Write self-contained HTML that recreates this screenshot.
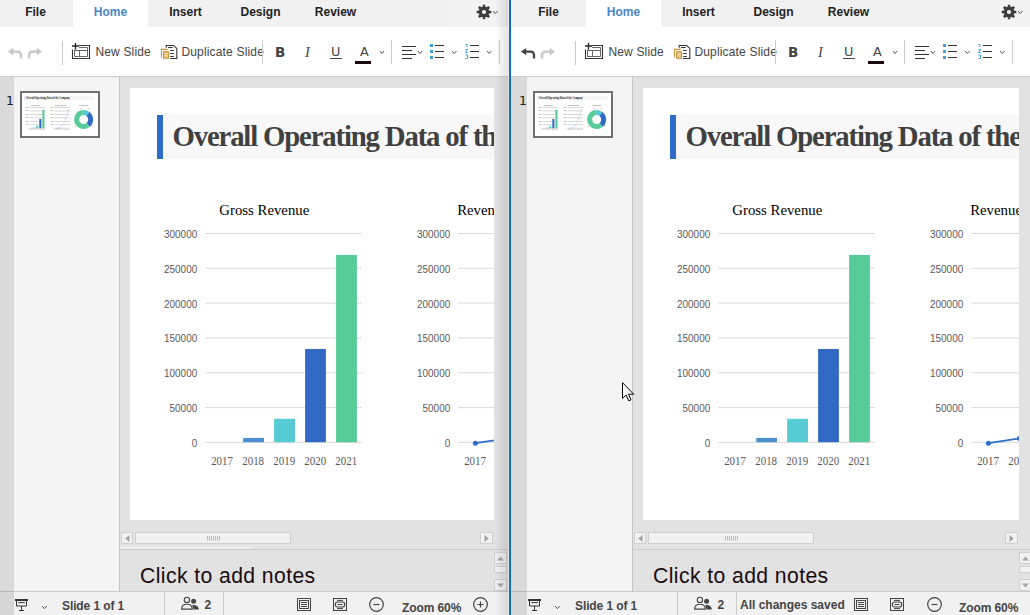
<!DOCTYPE html><html><head><meta charset="utf-8"><title>Presentation Editor</title><style>
html,body{margin:0;padding:0;}
body{width:1030px;height:615px;overflow:hidden;position:relative;background:#e2e2e2;font-family:"Liberation Sans",Arial,sans-serif;font-size:12px;color:#444;}
.pane{position:absolute;top:0;height:615px;overflow:hidden;background:#e2e2e2;}
.abs{position:absolute;}
.tabbar{position:absolute;left:0;top:0;right:0;height:27px;background:#f1f1f1;}
.tab{position:absolute;top:0;width:75px;height:27px;line-height:25px;text-align:center;font-weight:bold;font-size:12px;color:#222;}
.tab.act{background:#fff;color:#4a87c7;}
.toolbar{position:absolute;left:0;top:27px;right:0;height:49px;background:#fff;border-bottom:1px solid #cbcbcb;}
.sep{position:absolute;width:1px;background:#cbcbcb;top:40px;height:24px;}
.tbtxt{position:absolute;top:45px;line-height:14px;font-size:12px;color:#444;white-space:nowrap;letter-spacing:0.17px;margin-left:-0.6px;}
.strip{position:absolute;left:0;top:77px;width:16px;bottom:0;background:rgba(0,0,0,0.105);}
.thumbs{position:absolute;left:0;top:77px;width:121px;height:514px;background:#f4f4f4;border-right:1px solid #c4c4c4;}
.editor{position:absolute;left:122px;top:77px;right:0;height:472px;background:#e2e2e2;overflow:hidden;}
.slideclip{position:absolute;left:10px;top:11px;right:15px;height:432px;overflow:hidden;}
.slide{position:absolute;left:0;top:0;width:768px;height:432px;background:#fff;}
.notes{position:absolute;left:122px;top:549px;right:0;height:42px;border-top:1px solid #cbcbcb;background:#e2e2e2;overflow:hidden;}
.status{position:absolute;left:0;top:591px;right:0;height:23px;border-top:1px solid #cbcbcb;background:#f1f1f1;}
.sttxt{position:absolute;top:599px;line-height:14px;font-size:12px;font-weight:bold;color:#444;white-space:nowrap;letter-spacing:-0.1px;}
.sbtn{position:absolute;background:#f1f1f1;border:1px solid #cfcfcf;box-sizing:border-box;}
svg{position:absolute;overflow:visible;}
.serif{font-family:"Liberation Serif","Times New Roman",serif;}
</style></head><body><div class="pane" style="left:-2px;width:511px"><div class="tabbar"><div class="abs" style="left:450px;top:0;right:0;height:27px;background:#f3f3f3"></div><div class="tab" style="left:0px">File</div><div class="tab act" style="left:75px">Home</div><div class="tab" style="left:150px">Insert</div><div class="tab" style="left:225px">Design</div><div class="tab" style="left:300px">Review</div><svg class="abs" style="left:0;top:0" width="511" height="27"><path d="M480.55 12.00 a5.45 5.45 0 1 1 10.90 0 a5.45 5.45 0 1 1 -10.90 0 Z M483.90 12.00 a2.10 2.10 0 1 0 4.20 0 a2.10 2.10 0 1 0 -4.20 0 Z M490.25 10.40 L493.30 10.85 L493.30 13.15 L490.25 13.60 Z M490.14 13.87 L491.98 16.35 L490.35 17.98 L487.87 16.14 Z M487.60 16.25 L487.15 19.30 L484.85 19.30 L484.40 16.25 Z M484.13 16.14 L481.65 17.98 L480.02 16.35 L481.86 13.87 Z M481.75 13.60 L478.70 13.15 L478.70 10.85 L481.75 10.40 Z M481.86 10.13 L480.02 7.65 L481.65 6.02 L484.13 7.86 Z M484.40 7.75 L484.85 4.70 L487.15 4.70 L487.60 7.75 Z M487.87 7.86 L490.35 6.02 L491.98 7.65 L490.14 10.13 Z" fill="#3c3c3c" fill-rule="nonzero"/></svg><svg class="abs" style="left:494.7px;top:10.9px" width="4.5" height="3.5"><path d="M0 0 L2.25 2.5 L4.5 0" fill="none" stroke="#555" stroke-width="1"/></svg></div><div class="toolbar"></div><svg class="abs" style="left:10px;top:47.6px" width="15" height="11" viewBox="0 0 15 11"><path d="M5.2 0 L0 3.6 L5.2 7.2 Z" fill="#c6c6c6"/><path d="M4 3.6 H9.5 Q13 3.6 13 7.5 V10.5" fill="none" stroke="#c6c6c6" stroke-width="2.3"/></svg><svg class="abs" style="left:29.2px;top:47.6px" width="15" height="11" viewBox="0 0 15 11"><path d="M9.8 0 L15 3.6 L9.8 7.2 Z" fill="#c6c6c6"/><path d="M11 3.6 H5.5 Q2 3.6 2 7.5 V10.5" fill="none" stroke="#c6c6c6" stroke-width="2.3"/></svg><div class="sep" style="left:64px;top:41px"></div><svg class="abs" style="left:73px;top:43px" width="19" height="16" viewBox="0 0 19 16"><path d="M4.5 0 V6.6 M1 3 H8" stroke="#222" stroke-width="1.35" fill="none"/><path d="M8 2.5 H18.5 V15.5 H1.5 V6.6" stroke="#333" stroke-width="1.1" fill="none"/><path d="M8 4.5 H16.5 V13.5 H3.5 V6.6 M3.5 7.5 H16.5 M8.5 7.5 V13.5" stroke="#666" stroke-width="1" fill="none"/></svg><div class="tbtxt" style="left:98px">New Slide</div><svg class="abs" style="left:163px;top:45px" width="17" height="15" viewBox="0 0 17 15"><path d="M5.2 2.7 V0.5 H12.6 L15.8 3.4 V13.5 H9.2" stroke="#333" stroke-width="1.1" fill="none"/><path d="M7.1 2.5 H11.7 M9.2 5.5 H12.8 M9.2 8.5 H12.8 M9.2 11.5 H12.8" stroke="#333" stroke-width="1.1" fill="none"/><path d="M0.5 12.6 V4.4 H6.7" stroke="#c8923a" stroke-width="1.1" fill="none"/><rect x="2.7" y="6.8" width="4.8" height="6.4" fill="#f3cf96" stroke="#c8923a" stroke-width="1.2"/></svg><div class="tbtxt" style="left:184px">Duplicate Slide</div><div class="sep" style="left:264px"></div><div class="abs" style="left:277px;top:44.2px;font:bold 13.5px/16px 'DejaVu Sans',sans-serif;color:#444">B</div><div class="abs" style="left:307px;top:44px;font:italic 14.5px/16px 'Liberation Serif',serif;color:#444">I</div><div class="abs" style="left:333px;top:44.2px;font:12.8px/16px 'DejaVu Sans',sans-serif;color:#444">U</div><div class="abs" style="left:332px;top:58px;width:12px;height:1px;background:#444"></div><div class="abs" style="left:362px;top:44.2px;font:12.8px/16px 'DejaVu Sans',sans-serif;color:#444">A</div><div class="abs" style="left:357px;top:61px;width:16px;height:3px;background:#1a0a0a"></div><svg class="abs" style="left:381.5px;top:51px" width="4" height="3.5"><path d="M0 0 L2 2.5 L4 0" fill="none" stroke="#555" stroke-width="1"/></svg><div class="sep" style="left:393px"></div><svg class="abs" style="left:404px;top:45px" width="15" height="14"><path d="M0 1.5 H14 M0 5.5 H10 M0 9.5 H14 M0 13.5 H10" stroke="#333" stroke-width="1" fill="none"/></svg><svg class="abs" style="left:420px;top:51px" width="4" height="3.5"><path d="M0 0 L2 2.5 L4 0" fill="none" stroke="#555" stroke-width="1"/></svg><svg class="abs" style="left:432px;top:44px" width="15" height="15"><rect x="0" y="0" width="3" height="3" fill="#3d9fdb"/><rect x="0" y="6" width="3" height="3" fill="#3d9fdb"/><rect x="0" y="12" width="3" height="3" fill="#3d9fdb"/><path d="M5 1.5 H14 M5 7.5 H14 M5 13.5 H14" stroke="#333" fill="none"/></svg><svg class="abs" style="left:454px;top:51px" width="4.5" height="3.5"><path d="M0 0 L2.25 2.5 L4.5 0" fill="none" stroke="#555" stroke-width="1"/></svg><svg class="abs" style="left:467px;top:44px" width="15" height="15"><path d="M0.5 0.5 H2 V3 M0.5 5.5 H2.5 L0.5 8.5 H2.5 M0.5 11 H2.5 V14.5 H0.5" stroke="#3d9fdb" fill="none"/><path d="M5 1.5 H14 M5 7.5 H14 M5 13.5 H14" stroke="#333" fill="none"/></svg><svg class="abs" style="left:489px;top:51px" width="4.5" height="3.5"><path d="M0 0 L2.25 2.5 L4.5 0" fill="none" stroke="#555" stroke-width="1"/></svg><div class="sep" style="left:501px"></div><svg class="abs" style="left:0;top:320px" width="16" height="60"><path d="M14.5 5 L2 29 L14.5 53" fill="none" stroke="#b4b4b4" stroke-width="3.2"/></svg><div class="thumbs"></div><div class="abs" style="left:8px;top:94px;font:12.5px/14px 'DejaVu Sans',sans-serif;color:#222">1</div><div class="abs" style="left:22px;top:91px;width:76px;height:43px;border:2px solid #707070;background:#fff;overflow:hidden"><svg class="abs" style="left:0;top:0" width="76" height="43" viewBox="0 0 768 432"><rect x="27" y="27" width="6" height="44" fill="#2f6bc9" opacity=".55"/><rect x="33" y="27" width="698" height="44" fill="#f6f6f6"/><text x="42.5" y="58" font-family="Liberation Serif, serif" font-weight="bold" font-size="31" fill="#1c1c1c" textLength="441" lengthAdjust="spacingAndGlyphs">Overall Operating Data of the Company</text><svg class="abs" style="left:0;top:0" width="768" height="432"><text x="134.3" y="127" font-family="Liberation Serif, serif" font-size="14.8" fill="#000" text-anchor="middle">Gross Revenue</text><rect x="75.2" y="142" width="156.5" height="7" fill="#c6c6c6"/><text x="34.02" y="149.9" font-family="Liberation Sans, sans-serif" font-size="10.8" fill="#595959" textLength="33.18" lengthAdjust="spacingAndGlyphs">300000</text><rect x="75.2" y="176.8" width="156.5" height="7" fill="#c6c6c6"/><text x="34.02" y="184.7" font-family="Liberation Sans, sans-serif" font-size="10.8" fill="#595959" textLength="33.18" lengthAdjust="spacingAndGlyphs">250000</text><rect x="75.2" y="211.6" width="156.5" height="7" fill="#c6c6c6"/><text x="34.02" y="219.5" font-family="Liberation Sans, sans-serif" font-size="10.8" fill="#595959" textLength="33.18" lengthAdjust="spacingAndGlyphs">200000</text><rect x="75.2" y="246.5" width="156.5" height="7" fill="#c6c6c6"/><text x="34.02" y="254.4" font-family="Liberation Sans, sans-serif" font-size="10.8" fill="#595959" textLength="33.18" lengthAdjust="spacingAndGlyphs">150000</text><rect x="75.2" y="281.3" width="156.5" height="7" fill="#c6c6c6"/><text x="34.02" y="289.2" font-family="Liberation Sans, sans-serif" font-size="10.8" fill="#595959" textLength="33.18" lengthAdjust="spacingAndGlyphs">100000</text><rect x="75.2" y="316.1" width="156.5" height="7" fill="#c6c6c6"/><text x="39.55" y="324" font-family="Liberation Sans, sans-serif" font-size="10.8" fill="#595959" textLength="27.65" lengthAdjust="spacingAndGlyphs">50000</text><rect x="75.2" y="350.9" width="156.5" height="7" fill="#c6c6c6"/><text x="61.67" y="358.8" font-family="Liberation Sans, sans-serif" font-size="10.8" fill="#595959" textLength="5.53" lengthAdjust="spacingAndGlyphs">0</text><rect x="113.2" y="349.9" width="20.8" height="4.3" fill="#4a90d2"/><rect x="144.1" y="330.8" width="20.9" height="23.4" fill="#56cbd4"/><rect x="175.1" y="261" width="20.8" height="93.2" fill="#3269c4"/><rect x="206.1" y="166.9" width="20.8" height="187.3" fill="#57cc99"/><text x="81.15" y="377.4" font-family="Liberation Serif, serif" font-size="11.5" fill="#595959" textLength="21.9" lengthAdjust="spacingAndGlyphs">2017</text><text x="112.19" y="377.4" font-family="Liberation Serif, serif" font-size="11.5" fill="#595959" textLength="21.9" lengthAdjust="spacingAndGlyphs">2018</text><text x="143.23" y="377.4" font-family="Liberation Serif, serif" font-size="11.5" fill="#595959" textLength="21.9" lengthAdjust="spacingAndGlyphs">2019</text><text x="174.27" y="377.4" font-family="Liberation Serif, serif" font-size="11.5" fill="#595959" textLength="21.9" lengthAdjust="spacingAndGlyphs">2020</text><text x="205.31" y="377.4" font-family="Liberation Serif, serif" font-size="11.5" fill="#595959" textLength="21.9" lengthAdjust="spacingAndGlyphs">2021</text></svg><svg class="abs" style="left:0;top:0" width="768" height="432"><text x="327.2" y="127" font-family="Liberation Serif, serif" font-size="14.8" fill="#000">Revenue Trend Line</text><rect x="328.2" y="142" width="156.5" height="7" fill="#c6c6c6"/><text x="287.02" y="149.9" font-family="Liberation Sans, sans-serif" font-size="10.8" fill="#595959" textLength="33.18" lengthAdjust="spacingAndGlyphs">300000</text><rect x="328.2" y="176.8" width="156.5" height="7" fill="#c6c6c6"/><text x="287.02" y="184.7" font-family="Liberation Sans, sans-serif" font-size="10.8" fill="#595959" textLength="33.18" lengthAdjust="spacingAndGlyphs">250000</text><rect x="328.2" y="211.6" width="156.5" height="7" fill="#c6c6c6"/><text x="287.02" y="219.5" font-family="Liberation Sans, sans-serif" font-size="10.8" fill="#595959" textLength="33.18" lengthAdjust="spacingAndGlyphs">200000</text><rect x="328.2" y="246.5" width="156.5" height="7" fill="#c6c6c6"/><text x="287.02" y="254.4" font-family="Liberation Sans, sans-serif" font-size="10.8" fill="#595959" textLength="33.18" lengthAdjust="spacingAndGlyphs">150000</text><rect x="328.2" y="281.3" width="156.5" height="7" fill="#c6c6c6"/><text x="287.02" y="289.2" font-family="Liberation Sans, sans-serif" font-size="10.8" fill="#595959" textLength="33.18" lengthAdjust="spacingAndGlyphs">100000</text><rect x="328.2" y="316.1" width="156.5" height="7" fill="#c6c6c6"/><text x="292.55" y="324" font-family="Liberation Sans, sans-serif" font-size="10.8" fill="#595959" textLength="27.65" lengthAdjust="spacingAndGlyphs">50000</text><rect x="328.2" y="350.9" width="156.5" height="7" fill="#c6c6c6"/><text x="314.67" y="358.8" font-family="Liberation Sans, sans-serif" font-size="10.8" fill="#595959" textLength="5.53" lengthAdjust="spacingAndGlyphs">0</text><polyline points="345.4,355.2 376.4,350.5 407.5,331 438.5,261 469.6,167" fill="none" stroke="#2f6bc9" stroke-width="1.7"/><circle cx="345.4" cy="355.2" r="2.5" fill="#2f6bc9"/><circle cx="376.4" cy="350.5" r="2.5" fill="#2f6bc9"/><circle cx="407.5" cy="331" r="2.5" fill="#2f6bc9"/><circle cx="438.5" cy="261" r="2.5" fill="#2f6bc9"/><circle cx="469.6" cy="167" r="2.5" fill="#2f6bc9"/><text x="334.15" y="377.4" font-family="Liberation Serif, serif" font-size="11.5" fill="#595959" textLength="21.9" lengthAdjust="spacingAndGlyphs">2017</text><text x="365.19" y="377.4" font-family="Liberation Serif, serif" font-size="11.5" fill="#595959" textLength="21.9" lengthAdjust="spacingAndGlyphs">2018</text><text x="396.23" y="377.4" font-family="Liberation Serif, serif" font-size="11.5" fill="#595959" textLength="21.9" lengthAdjust="spacingAndGlyphs">2019</text><text x="427.27" y="377.4" font-family="Liberation Serif, serif" font-size="11.5" fill="#595959" textLength="21.9" lengthAdjust="spacingAndGlyphs">2020</text><text x="458.31" y="377.4" font-family="Liberation Serif, serif" font-size="11.5" fill="#595959" textLength="21.9" lengthAdjust="spacingAndGlyphs">2021</text></svg><svg class="abs" style="left:0;top:0" width="768" height="432"><text x="623" y="127" font-family="Liberation Serif, serif" font-size="15" fill="#000" text-anchor="middle">Revenue Share</text><path d="M613.1 196.2 A71 71 0 0 1 666.2 210.2" fill="none" stroke="#56cbd4" stroke-width="50"/><path d="M666.2 210.2 A71 71 0 0 1 668.6 320.9" fill="none" stroke="#3269c4" stroke-width="50"/><path d="M668.6 320.9 A71 71 0 1 1 613.1 196.2" fill="none" stroke="#57cc99" stroke-width="50"/><text x="599" y="156" font-family="Liberation Sans, sans-serif" font-size="10" fill="#595959" text-anchor="middle">2%</text><text x="674" y="156" font-family="Liberation Sans, sans-serif" font-size="10" fill="#595959" text-anchor="middle">8%</text><text x="537" y="345" font-family="Liberation Sans, sans-serif" font-size="10" fill="#595959" text-anchor="middle">61%</text><text x="707" y="337" font-family="Liberation Sans, sans-serif" font-size="10" fill="#595959" text-anchor="middle">29%</text></svg></svg></div><div class="editor"><div class="slideclip"><div class="slide"><div class="abs" style="left:27.2px;top:27px;width:5.4px;height:44px;background:#2f6bc9"></div><div class="abs" style="left:33px;top:27px;width:698px;height:44px;background:#f8f8f8"></div><div class="abs serif" id="title" style="left:42.5px;top:26px;line-height:44px;font-size:28.8px;font-weight:bold;color:#404040;white-space:nowrap;letter-spacing:-1.18px">Overall Operating Data of the Company</div><svg class="abs" style="left:0;top:0" width="768" height="432"><text class="serif" id="c1t" x="134.3" y="127" font-family="Liberation Serif, serif" font-size="14.8" fill="#000" text-anchor="middle">Gross Revenue</text><rect x="75.2" y="145" width="156.5" height="1" fill="#d9d9d9"/><text x="34.02" y="149.9" font-family="Liberation Sans, sans-serif" font-size="10.8" fill="#595959" textLength="33.18" lengthAdjust="spacingAndGlyphs">300000</text><rect x="75.2" y="179.8" width="156.5" height="1" fill="#d9d9d9"/><text x="34.02" y="184.7" font-family="Liberation Sans, sans-serif" font-size="10.8" fill="#595959" textLength="33.18" lengthAdjust="spacingAndGlyphs">250000</text><rect x="75.2" y="214.6" width="156.5" height="1" fill="#d9d9d9"/><text x="34.02" y="219.5" font-family="Liberation Sans, sans-serif" font-size="10.8" fill="#595959" textLength="33.18" lengthAdjust="spacingAndGlyphs">200000</text><rect x="75.2" y="249.5" width="156.5" height="1" fill="#d9d9d9"/><text x="34.02" y="254.4" font-family="Liberation Sans, sans-serif" font-size="10.8" fill="#595959" textLength="33.18" lengthAdjust="spacingAndGlyphs">150000</text><rect x="75.2" y="284.3" width="156.5" height="1" fill="#d9d9d9"/><text x="34.02" y="289.2" font-family="Liberation Sans, sans-serif" font-size="10.8" fill="#595959" textLength="33.18" lengthAdjust="spacingAndGlyphs">100000</text><rect x="75.2" y="319.1" width="156.5" height="1" fill="#d9d9d9"/><text x="39.55" y="324" font-family="Liberation Sans, sans-serif" font-size="10.8" fill="#595959" textLength="27.65" lengthAdjust="spacingAndGlyphs">50000</text><rect x="75.2" y="353.9" width="156.5" height="1" fill="#d9d9d9"/><text x="61.67" y="358.8" font-family="Liberation Sans, sans-serif" font-size="10.8" fill="#595959" textLength="5.53" lengthAdjust="spacingAndGlyphs">0</text><rect x="113.2" y="349.9" width="20.8" height="4.3" fill="#4a90d2"/><rect x="144.1" y="330.8" width="20.9" height="23.4" fill="#56cbd4"/><rect x="175.1" y="261" width="20.8" height="93.2" fill="#3269c4"/><rect x="206.1" y="166.9" width="20.8" height="187.3" fill="#57cc99"/><text x="81.15" y="377.4" font-family="Liberation Serif, serif" font-size="11.5" fill="#595959" textLength="21.9" lengthAdjust="spacingAndGlyphs">2017</text><text x="112.19" y="377.4" font-family="Liberation Serif, serif" font-size="11.5" fill="#595959" textLength="21.9" lengthAdjust="spacingAndGlyphs">2018</text><text x="143.23" y="377.4" font-family="Liberation Serif, serif" font-size="11.5" fill="#595959" textLength="21.9" lengthAdjust="spacingAndGlyphs">2019</text><text x="174.27" y="377.4" font-family="Liberation Serif, serif" font-size="11.5" fill="#595959" textLength="21.9" lengthAdjust="spacingAndGlyphs">2020</text><text x="205.31" y="377.4" font-family="Liberation Serif, serif" font-size="11.5" fill="#595959" textLength="21.9" lengthAdjust="spacingAndGlyphs">2021</text></svg><svg class="abs" style="left:0;top:0" width="768" height="432"><text x="327.2" y="127" font-family="Liberation Serif, serif" font-size="14.8" fill="#000">Revenue Trend Line</text><rect x="328.2" y="145" width="156.5" height="1" fill="#d9d9d9"/><text x="287.02" y="149.9" font-family="Liberation Sans, sans-serif" font-size="10.8" fill="#595959" textLength="33.18" lengthAdjust="spacingAndGlyphs">300000</text><rect x="328.2" y="179.8" width="156.5" height="1" fill="#d9d9d9"/><text x="287.02" y="184.7" font-family="Liberation Sans, sans-serif" font-size="10.8" fill="#595959" textLength="33.18" lengthAdjust="spacingAndGlyphs">250000</text><rect x="328.2" y="214.6" width="156.5" height="1" fill="#d9d9d9"/><text x="287.02" y="219.5" font-family="Liberation Sans, sans-serif" font-size="10.8" fill="#595959" textLength="33.18" lengthAdjust="spacingAndGlyphs">200000</text><rect x="328.2" y="249.5" width="156.5" height="1" fill="#d9d9d9"/><text x="287.02" y="254.4" font-family="Liberation Sans, sans-serif" font-size="10.8" fill="#595959" textLength="33.18" lengthAdjust="spacingAndGlyphs">150000</text><rect x="328.2" y="284.3" width="156.5" height="1" fill="#d9d9d9"/><text x="287.02" y="289.2" font-family="Liberation Sans, sans-serif" font-size="10.8" fill="#595959" textLength="33.18" lengthAdjust="spacingAndGlyphs">100000</text><rect x="328.2" y="319.1" width="156.5" height="1" fill="#d9d9d9"/><text x="292.55" y="324" font-family="Liberation Sans, sans-serif" font-size="10.8" fill="#595959" textLength="27.65" lengthAdjust="spacingAndGlyphs">50000</text><rect x="328.2" y="353.9" width="156.5" height="1" fill="#d9d9d9"/><text x="314.67" y="358.8" font-family="Liberation Sans, sans-serif" font-size="10.8" fill="#595959" textLength="5.53" lengthAdjust="spacingAndGlyphs">0</text><polyline points="345.4,355.2 376.4,350.5 407.5,331 438.5,261 469.6,167" fill="none" stroke="#2f6bc9" stroke-width="1.7"/><circle cx="345.4" cy="355.2" r="2.5" fill="#2f6bc9"/><circle cx="376.4" cy="350.5" r="2.5" fill="#2f6bc9"/><circle cx="407.5" cy="331" r="2.5" fill="#2f6bc9"/><circle cx="438.5" cy="261" r="2.5" fill="#2f6bc9"/><circle cx="469.6" cy="167" r="2.5" fill="#2f6bc9"/><text x="334.15" y="377.4" font-family="Liberation Serif, serif" font-size="11.5" fill="#595959" textLength="21.9" lengthAdjust="spacingAndGlyphs">2017</text><text x="365.19" y="377.4" font-family="Liberation Serif, serif" font-size="11.5" fill="#595959" textLength="21.9" lengthAdjust="spacingAndGlyphs">2018</text><text x="396.23" y="377.4" font-family="Liberation Serif, serif" font-size="11.5" fill="#595959" textLength="21.9" lengthAdjust="spacingAndGlyphs">2019</text><text x="427.27" y="377.4" font-family="Liberation Serif, serif" font-size="11.5" fill="#595959" textLength="21.9" lengthAdjust="spacingAndGlyphs">2020</text><text x="458.31" y="377.4" font-family="Liberation Serif, serif" font-size="11.5" fill="#595959" textLength="21.9" lengthAdjust="spacingAndGlyphs">2021</text></svg><svg class="abs" style="left:0;top:0" width="768" height="432"><text x="623" y="127" font-family="Liberation Serif, serif" font-size="15" fill="#000" text-anchor="middle">Revenue Share</text><path d="M613.1 196.2 A71 71 0 0 1 666.2 210.2" fill="none" stroke="#56cbd4" stroke-width="50"/><path d="M666.2 210.2 A71 71 0 0 1 668.6 320.9" fill="none" stroke="#3269c4" stroke-width="50"/><path d="M668.6 320.9 A71 71 0 1 1 613.1 196.2" fill="none" stroke="#57cc99" stroke-width="50"/><text x="599" y="156" font-family="Liberation Sans, sans-serif" font-size="10" fill="#595959" text-anchor="middle">2%</text><text x="674" y="156" font-family="Liberation Sans, sans-serif" font-size="10" fill="#595959" text-anchor="middle">8%</text><text x="537" y="345" font-family="Liberation Sans, sans-serif" font-size="10" fill="#595959" text-anchor="middle">61%</text><text x="707" y="337" font-family="Liberation Sans, sans-serif" font-size="10" fill="#595959" text-anchor="middle">29%</text></svg></div></div><div class="sbtn" style="left:1.3px;top:455.4px;width:12.2px;height:12px"></div><svg class="abs" style="left:5px;top:458px" width="5" height="8"><path d="M4.5 0 V7 L0.2 3.5 Z" fill="#a4a4a4"/></svg><div class="sbtn" style="left:15.3px;top:455.4px;width:155.3px;height:12px;background:#f1f1f1"></div><svg class="abs" style="left:87.15px;top:459.4px" width="14" height="5"><path d="M0.5 0 V4.6 M2.5 0 V4.6 M4.5 0 V4.6 M6.5 0 V4.6 M8.5 0 V4.6 M10.5 0 V4.6 M12.5 0 V4.6" stroke="#bcbcbc" stroke-width="1"/></svg><div class="sbtn" style="right:16.2px;top:455.4px;width:12.6px;height:12px"></div><svg class="abs" style="right:20px;top:458px" width="5" height="8"><path d="M0.5 0 V7 L4.8 3.5 Z" fill="#a4a4a4"/></svg><div class="abs" style="left:0;top:469px;width:133px;height:3px;background:#ececec"></div></div><div class="notes"><div class="abs" id="notes" style="left:20px;top:11px;font:21.2px/30px 'Liberation Sans',sans-serif;color:#1a0a0e;white-space:nowrap;letter-spacing:0.4px">Click to add notes</div><div class="sbtn" style="right:2.5px;top:2px;width:12.5px;height:12px"></div><svg class="abs" style="right:5.3px;top:6px" width="7" height="5"><path d="M0 4.5 H7 L3.5 0.5 Z" fill="#a8a8a8"/></svg><div class="sbtn" style="right:2.5px;top:16px;width:12.5px;height:7px"></div><div class="sbtn" style="right:2.5px;top:29px;width:12.5px;height:12px"></div><svg class="abs" style="right:5.3px;top:33px" width="7" height="5"><path d="M0 0.5 H7 L3.5 4.5 Z" fill="#a8a8a8"/></svg></div><div class="status"></div><svg class="abs" style="left:17px;top:599px" width="13" height="12"><path d="M0 1 H13" stroke="#333" stroke-width="2"/><path d="M1.5 2 V7 H11.5 V2 M3.3 3.6 H9.9 M6.5 7 V11 M4 11.5 H9" stroke="#333" fill="none"/></svg><svg class="abs" style="left:44.2px;top:606.3px" width="4.8" height="3.6"><path d="M0 0 L2.4 2.6 L4.8 0" fill="none" stroke="#555" stroke-width="1"/></svg><div class="sttxt" style="left:64px">Slide 1 of 1</div><div class="abs" style="left:166px;top:592px;width:1px;height:23px;background:#cbcbcb"></div><svg class="abs" style="left:183px;top:597px" width="19" height="14" viewBox="0 0 19 14"><circle cx="5.9" cy="2.9" r="2.65" fill="none" stroke="#444" stroke-width="1.1"/><path d="M0.6 12.1 Q0.7 7.3 5.9 7.3 Q11.1 7.3 11.3 12.1 Z" fill="none" stroke="#444" stroke-width="1.1"/><circle cx="12.6" cy="4.3" r="2.5" fill="#444"/><path d="M10.8 8.4 Q12.4 7.8 13.6 8 Q17.4 8.6 17.9 12.6 H12.5 Q12.3 9.8 10.8 8.4 Z" fill="#444"/></svg><div class="sttxt" style="left:206.4px;top:598px">2</div><div class="abs" style="left:225px;top:592px;width:1px;height:23px;background:#cbcbcb"></div><svg class="abs" style="left:299px;top:598px" width="14" height="13"><rect x="0.5" y="0.5" width="13" height="12" fill="none" stroke="#444"/><rect x="2.5" y="2.5" width="9" height="8" fill="none" stroke="#444"/><path d="M4 4.5 H10 M4 6.5 H10 M4 8.5 H10" stroke="#444"/></svg><svg class="abs" style="left:335px;top:598px" width="14" height="13"><rect x="0.5" y="0.5" width="13" height="12" fill="none" stroke="#444"/><rect x="2.3" y="4" width="9.4" height="5" rx="2.2" fill="none" stroke="#444" stroke-width="1.2"/><path d="M4.5 6.5 H9.5 M4 2.4 H10 M4 10.6 H10" stroke="#444"/></svg><svg class="abs" style="left:371px;top:597px" width="15" height="15"><circle cx="7.5" cy="7.5" r="6.8" fill="none" stroke="#444" stroke-width="1.2"/><path d="M4.5 7.5 H10.5" stroke="#444" stroke-width="1.2"/></svg><div class="sttxt" style="left:404px;top:601px">Zoom 60%</div><svg class="abs" style="left:475px;top:597px" width="15" height="15"><circle cx="7.5" cy="7.5" r="6.8" fill="none" stroke="#444" stroke-width="1.2"/><path d="M4.5 7.5 H10.5 M7.5 4.5 V10.5" stroke="#444" stroke-width="1.2"/></svg><div class="strip"></div></div><div class="pane" style="left:511px;width:523px"><div class="tabbar"><div class="abs" style="left:450px;top:0;right:0;height:27px;background:#f3f3f3"></div><div class="tab" style="left:0px">File</div><div class="tab act" style="left:75px">Home</div><div class="tab" style="left:150px">Insert</div><div class="tab" style="left:225px">Design</div><div class="tab" style="left:300px">Review</div><svg class="abs" style="left:0;top:0" width="523" height="27"><path d="M492.55 12.00 a5.45 5.45 0 1 1 10.90 0 a5.45 5.45 0 1 1 -10.90 0 Z M495.90 12.00 a2.10 2.10 0 1 0 4.20 0 a2.10 2.10 0 1 0 -4.20 0 Z M502.25 10.40 L505.30 10.85 L505.30 13.15 L502.25 13.60 Z M502.14 13.87 L503.98 16.35 L502.35 17.98 L499.87 16.14 Z M499.60 16.25 L499.15 19.30 L496.85 19.30 L496.40 16.25 Z M496.13 16.14 L493.65 17.98 L492.02 16.35 L493.86 13.87 Z M493.75 13.60 L490.70 13.15 L490.70 10.85 L493.75 10.40 Z M493.86 10.13 L492.02 7.65 L493.65 6.02 L496.13 7.86 Z M496.40 7.75 L496.85 4.70 L499.15 4.70 L499.60 7.75 Z M499.87 7.86 L502.35 6.02 L503.98 7.65 L502.14 10.13 Z" fill="#3c3c3c" fill-rule="nonzero"/></svg><svg class="abs" style="left:506.7px;top:10.9px" width="4.5" height="3.5"><path d="M0 0 L2.25 2.5 L4.5 0" fill="none" stroke="#555" stroke-width="1"/></svg></div><div class="toolbar"></div><svg class="abs" style="left:10px;top:47.6px" width="15" height="11" viewBox="0 0 15 11"><path d="M5.2 0 L0 3.6 L5.2 7.2 Z" fill="#444"/><path d="M4 3.6 H9.5 Q13 3.6 13 7.5 V10.5" fill="none" stroke="#444" stroke-width="2.3"/></svg><svg class="abs" style="left:29.2px;top:47.6px" width="15" height="11" viewBox="0 0 15 11"><path d="M9.8 0 L15 3.6 L9.8 7.2 Z" fill="#c6c6c6"/><path d="M11 3.6 H5.5 Q2 3.6 2 7.5 V10.5" fill="none" stroke="#c6c6c6" stroke-width="2.3"/></svg><div class="sep" style="left:64px;top:41px"></div><svg class="abs" style="left:73px;top:43px" width="19" height="16" viewBox="0 0 19 16"><path d="M4.5 0 V6.6 M1 3 H8" stroke="#222" stroke-width="1.35" fill="none"/><path d="M8 2.5 H18.5 V15.5 H1.5 V6.6" stroke="#333" stroke-width="1.1" fill="none"/><path d="M8 4.5 H16.5 V13.5 H3.5 V6.6 M3.5 7.5 H16.5 M8.5 7.5 V13.5" stroke="#666" stroke-width="1" fill="none"/></svg><div class="tbtxt" style="left:98px">New Slide</div><svg class="abs" style="left:163px;top:45px" width="17" height="15" viewBox="0 0 17 15"><path d="M5.2 2.7 V0.5 H12.6 L15.8 3.4 V13.5 H9.2" stroke="#333" stroke-width="1.1" fill="none"/><path d="M7.1 2.5 H11.7 M9.2 5.5 H12.8 M9.2 8.5 H12.8 M9.2 11.5 H12.8" stroke="#333" stroke-width="1.1" fill="none"/><path d="M0.5 12.6 V4.4 H6.7" stroke="#c8923a" stroke-width="1.1" fill="none"/><rect x="2.7" y="6.8" width="4.8" height="6.4" fill="#f3cf96" stroke="#c8923a" stroke-width="1.2"/></svg><div class="tbtxt" style="left:184px">Duplicate Slide</div><div class="sep" style="left:264px"></div><div class="abs" style="left:277px;top:44.2px;font:bold 13.5px/16px 'DejaVu Sans',sans-serif;color:#444">B</div><div class="abs" style="left:307px;top:44px;font:italic 14.5px/16px 'Liberation Serif',serif;color:#444">I</div><div class="abs" style="left:333px;top:44.2px;font:12.8px/16px 'DejaVu Sans',sans-serif;color:#444">U</div><div class="abs" style="left:332px;top:58px;width:12px;height:1px;background:#444"></div><div class="abs" style="left:362px;top:44.2px;font:12.8px/16px 'DejaVu Sans',sans-serif;color:#444">A</div><div class="abs" style="left:357px;top:61px;width:16px;height:3px;background:#1a0a0a"></div><svg class="abs" style="left:381.5px;top:51px" width="4" height="3.5"><path d="M0 0 L2 2.5 L4 0" fill="none" stroke="#555" stroke-width="1"/></svg><div class="sep" style="left:393px"></div><svg class="abs" style="left:404px;top:45px" width="15" height="14"><path d="M0 1.5 H14 M0 5.5 H10 M0 9.5 H14 M0 13.5 H10" stroke="#333" stroke-width="1" fill="none"/></svg><svg class="abs" style="left:420px;top:51px" width="4" height="3.5"><path d="M0 0 L2 2.5 L4 0" fill="none" stroke="#555" stroke-width="1"/></svg><svg class="abs" style="left:432px;top:44px" width="15" height="15"><rect x="0" y="0" width="3" height="3" fill="#3d9fdb"/><rect x="0" y="6" width="3" height="3" fill="#3d9fdb"/><rect x="0" y="12" width="3" height="3" fill="#3d9fdb"/><path d="M5 1.5 H14 M5 7.5 H14 M5 13.5 H14" stroke="#333" fill="none"/></svg><svg class="abs" style="left:454px;top:51px" width="4.5" height="3.5"><path d="M0 0 L2.25 2.5 L4.5 0" fill="none" stroke="#555" stroke-width="1"/></svg><svg class="abs" style="left:467px;top:44px" width="15" height="15"><path d="M0.5 0.5 H2 V3 M0.5 5.5 H2.5 L0.5 8.5 H2.5 M0.5 11 H2.5 V14.5 H0.5" stroke="#3d9fdb" fill="none"/><path d="M5 1.5 H14 M5 7.5 H14 M5 13.5 H14" stroke="#333" fill="none"/></svg><svg class="abs" style="left:489px;top:51px" width="4.5" height="3.5"><path d="M0 0 L2.25 2.5 L4.5 0" fill="none" stroke="#555" stroke-width="1"/></svg><div class="sep" style="left:501px"></div><svg class="abs" style="left:0;top:320px" width="16" height="60"><path d="M14.5 5 L2 29 L14.5 53" fill="none" stroke="#b4b4b4" stroke-width="3.2"/></svg><div class="thumbs"></div><div class="abs" style="left:8px;top:94px;font:12.5px/14px 'DejaVu Sans',sans-serif;color:#222">1</div><div class="abs" style="left:22px;top:91px;width:76px;height:43px;border:2px solid #707070;background:#fff;overflow:hidden"><svg class="abs" style="left:0;top:0" width="76" height="43" viewBox="0 0 768 432"><rect x="27" y="27" width="6" height="44" fill="#2f6bc9" opacity=".55"/><rect x="33" y="27" width="698" height="44" fill="#f6f6f6"/><text x="42.5" y="58" font-family="Liberation Serif, serif" font-weight="bold" font-size="31" fill="#1c1c1c" textLength="441" lengthAdjust="spacingAndGlyphs">Overall Operating Data of the Company</text><svg class="abs" style="left:0;top:0" width="768" height="432"><text x="134.3" y="127" font-family="Liberation Serif, serif" font-size="14.8" fill="#000" text-anchor="middle">Gross Revenue</text><rect x="75.2" y="142" width="156.5" height="7" fill="#c6c6c6"/><text x="34.02" y="149.9" font-family="Liberation Sans, sans-serif" font-size="10.8" fill="#595959" textLength="33.18" lengthAdjust="spacingAndGlyphs">300000</text><rect x="75.2" y="176.8" width="156.5" height="7" fill="#c6c6c6"/><text x="34.02" y="184.7" font-family="Liberation Sans, sans-serif" font-size="10.8" fill="#595959" textLength="33.18" lengthAdjust="spacingAndGlyphs">250000</text><rect x="75.2" y="211.6" width="156.5" height="7" fill="#c6c6c6"/><text x="34.02" y="219.5" font-family="Liberation Sans, sans-serif" font-size="10.8" fill="#595959" textLength="33.18" lengthAdjust="spacingAndGlyphs">200000</text><rect x="75.2" y="246.5" width="156.5" height="7" fill="#c6c6c6"/><text x="34.02" y="254.4" font-family="Liberation Sans, sans-serif" font-size="10.8" fill="#595959" textLength="33.18" lengthAdjust="spacingAndGlyphs">150000</text><rect x="75.2" y="281.3" width="156.5" height="7" fill="#c6c6c6"/><text x="34.02" y="289.2" font-family="Liberation Sans, sans-serif" font-size="10.8" fill="#595959" textLength="33.18" lengthAdjust="spacingAndGlyphs">100000</text><rect x="75.2" y="316.1" width="156.5" height="7" fill="#c6c6c6"/><text x="39.55" y="324" font-family="Liberation Sans, sans-serif" font-size="10.8" fill="#595959" textLength="27.65" lengthAdjust="spacingAndGlyphs">50000</text><rect x="75.2" y="350.9" width="156.5" height="7" fill="#c6c6c6"/><text x="61.67" y="358.8" font-family="Liberation Sans, sans-serif" font-size="10.8" fill="#595959" textLength="5.53" lengthAdjust="spacingAndGlyphs">0</text><rect x="113.2" y="349.9" width="20.8" height="4.3" fill="#4a90d2"/><rect x="144.1" y="330.8" width="20.9" height="23.4" fill="#56cbd4"/><rect x="175.1" y="261" width="20.8" height="93.2" fill="#3269c4"/><rect x="206.1" y="166.9" width="20.8" height="187.3" fill="#57cc99"/><text x="81.15" y="377.4" font-family="Liberation Serif, serif" font-size="11.5" fill="#595959" textLength="21.9" lengthAdjust="spacingAndGlyphs">2017</text><text x="112.19" y="377.4" font-family="Liberation Serif, serif" font-size="11.5" fill="#595959" textLength="21.9" lengthAdjust="spacingAndGlyphs">2018</text><text x="143.23" y="377.4" font-family="Liberation Serif, serif" font-size="11.5" fill="#595959" textLength="21.9" lengthAdjust="spacingAndGlyphs">2019</text><text x="174.27" y="377.4" font-family="Liberation Serif, serif" font-size="11.5" fill="#595959" textLength="21.9" lengthAdjust="spacingAndGlyphs">2020</text><text x="205.31" y="377.4" font-family="Liberation Serif, serif" font-size="11.5" fill="#595959" textLength="21.9" lengthAdjust="spacingAndGlyphs">2021</text></svg><svg class="abs" style="left:0;top:0" width="768" height="432"><text x="327.2" y="127" font-family="Liberation Serif, serif" font-size="14.8" fill="#000">Revenue Trend Line</text><rect x="328.2" y="142" width="156.5" height="7" fill="#c6c6c6"/><text x="287.02" y="149.9" font-family="Liberation Sans, sans-serif" font-size="10.8" fill="#595959" textLength="33.18" lengthAdjust="spacingAndGlyphs">300000</text><rect x="328.2" y="176.8" width="156.5" height="7" fill="#c6c6c6"/><text x="287.02" y="184.7" font-family="Liberation Sans, sans-serif" font-size="10.8" fill="#595959" textLength="33.18" lengthAdjust="spacingAndGlyphs">250000</text><rect x="328.2" y="211.6" width="156.5" height="7" fill="#c6c6c6"/><text x="287.02" y="219.5" font-family="Liberation Sans, sans-serif" font-size="10.8" fill="#595959" textLength="33.18" lengthAdjust="spacingAndGlyphs">200000</text><rect x="328.2" y="246.5" width="156.5" height="7" fill="#c6c6c6"/><text x="287.02" y="254.4" font-family="Liberation Sans, sans-serif" font-size="10.8" fill="#595959" textLength="33.18" lengthAdjust="spacingAndGlyphs">150000</text><rect x="328.2" y="281.3" width="156.5" height="7" fill="#c6c6c6"/><text x="287.02" y="289.2" font-family="Liberation Sans, sans-serif" font-size="10.8" fill="#595959" textLength="33.18" lengthAdjust="spacingAndGlyphs">100000</text><rect x="328.2" y="316.1" width="156.5" height="7" fill="#c6c6c6"/><text x="292.55" y="324" font-family="Liberation Sans, sans-serif" font-size="10.8" fill="#595959" textLength="27.65" lengthAdjust="spacingAndGlyphs">50000</text><rect x="328.2" y="350.9" width="156.5" height="7" fill="#c6c6c6"/><text x="314.67" y="358.8" font-family="Liberation Sans, sans-serif" font-size="10.8" fill="#595959" textLength="5.53" lengthAdjust="spacingAndGlyphs">0</text><polyline points="345.4,355.2 376.4,350.5 407.5,331 438.5,261 469.6,167" fill="none" stroke="#2f6bc9" stroke-width="1.7"/><circle cx="345.4" cy="355.2" r="2.5" fill="#2f6bc9"/><circle cx="376.4" cy="350.5" r="2.5" fill="#2f6bc9"/><circle cx="407.5" cy="331" r="2.5" fill="#2f6bc9"/><circle cx="438.5" cy="261" r="2.5" fill="#2f6bc9"/><circle cx="469.6" cy="167" r="2.5" fill="#2f6bc9"/><text x="334.15" y="377.4" font-family="Liberation Serif, serif" font-size="11.5" fill="#595959" textLength="21.9" lengthAdjust="spacingAndGlyphs">2017</text><text x="365.19" y="377.4" font-family="Liberation Serif, serif" font-size="11.5" fill="#595959" textLength="21.9" lengthAdjust="spacingAndGlyphs">2018</text><text x="396.23" y="377.4" font-family="Liberation Serif, serif" font-size="11.5" fill="#595959" textLength="21.9" lengthAdjust="spacingAndGlyphs">2019</text><text x="427.27" y="377.4" font-family="Liberation Serif, serif" font-size="11.5" fill="#595959" textLength="21.9" lengthAdjust="spacingAndGlyphs">2020</text><text x="458.31" y="377.4" font-family="Liberation Serif, serif" font-size="11.5" fill="#595959" textLength="21.9" lengthAdjust="spacingAndGlyphs">2021</text></svg><svg class="abs" style="left:0;top:0" width="768" height="432"><text x="623" y="127" font-family="Liberation Serif, serif" font-size="15" fill="#000" text-anchor="middle">Revenue Share</text><path d="M613.1 196.2 A71 71 0 0 1 666.2 210.2" fill="none" stroke="#56cbd4" stroke-width="50"/><path d="M666.2 210.2 A71 71 0 0 1 668.6 320.9" fill="none" stroke="#3269c4" stroke-width="50"/><path d="M668.6 320.9 A71 71 0 1 1 613.1 196.2" fill="none" stroke="#57cc99" stroke-width="50"/><text x="599" y="156" font-family="Liberation Sans, sans-serif" font-size="10" fill="#595959" text-anchor="middle">2%</text><text x="674" y="156" font-family="Liberation Sans, sans-serif" font-size="10" fill="#595959" text-anchor="middle">8%</text><text x="537" y="345" font-family="Liberation Sans, sans-serif" font-size="10" fill="#595959" text-anchor="middle">61%</text><text x="707" y="337" font-family="Liberation Sans, sans-serif" font-size="10" fill="#595959" text-anchor="middle">29%</text></svg></svg></div><div class="editor"><div class="slideclip"><div class="slide"><div class="abs" style="left:27.2px;top:27px;width:5.4px;height:44px;background:#2f6bc9"></div><div class="abs" style="left:33px;top:27px;width:698px;height:44px;background:#f8f8f8"></div><div class="abs serif" id="title" style="left:42.5px;top:26px;line-height:44px;font-size:28.8px;font-weight:bold;color:#404040;white-space:nowrap;letter-spacing:-1.18px">Overall Operating Data of the Company</div><svg class="abs" style="left:0;top:0" width="768" height="432"><text class="serif" id="c1t" x="134.3" y="127" font-family="Liberation Serif, serif" font-size="14.8" fill="#000" text-anchor="middle">Gross Revenue</text><rect x="75.2" y="145" width="156.5" height="1" fill="#d9d9d9"/><text x="34.02" y="149.9" font-family="Liberation Sans, sans-serif" font-size="10.8" fill="#595959" textLength="33.18" lengthAdjust="spacingAndGlyphs">300000</text><rect x="75.2" y="179.8" width="156.5" height="1" fill="#d9d9d9"/><text x="34.02" y="184.7" font-family="Liberation Sans, sans-serif" font-size="10.8" fill="#595959" textLength="33.18" lengthAdjust="spacingAndGlyphs">250000</text><rect x="75.2" y="214.6" width="156.5" height="1" fill="#d9d9d9"/><text x="34.02" y="219.5" font-family="Liberation Sans, sans-serif" font-size="10.8" fill="#595959" textLength="33.18" lengthAdjust="spacingAndGlyphs">200000</text><rect x="75.2" y="249.5" width="156.5" height="1" fill="#d9d9d9"/><text x="34.02" y="254.4" font-family="Liberation Sans, sans-serif" font-size="10.8" fill="#595959" textLength="33.18" lengthAdjust="spacingAndGlyphs">150000</text><rect x="75.2" y="284.3" width="156.5" height="1" fill="#d9d9d9"/><text x="34.02" y="289.2" font-family="Liberation Sans, sans-serif" font-size="10.8" fill="#595959" textLength="33.18" lengthAdjust="spacingAndGlyphs">100000</text><rect x="75.2" y="319.1" width="156.5" height="1" fill="#d9d9d9"/><text x="39.55" y="324" font-family="Liberation Sans, sans-serif" font-size="10.8" fill="#595959" textLength="27.65" lengthAdjust="spacingAndGlyphs">50000</text><rect x="75.2" y="353.9" width="156.5" height="1" fill="#d9d9d9"/><text x="61.67" y="358.8" font-family="Liberation Sans, sans-serif" font-size="10.8" fill="#595959" textLength="5.53" lengthAdjust="spacingAndGlyphs">0</text><rect x="113.2" y="349.9" width="20.8" height="4.3" fill="#4a90d2"/><rect x="144.1" y="330.8" width="20.9" height="23.4" fill="#56cbd4"/><rect x="175.1" y="261" width="20.8" height="93.2" fill="#3269c4"/><rect x="206.1" y="166.9" width="20.8" height="187.3" fill="#57cc99"/><text x="81.15" y="377.4" font-family="Liberation Serif, serif" font-size="11.5" fill="#595959" textLength="21.9" lengthAdjust="spacingAndGlyphs">2017</text><text x="112.19" y="377.4" font-family="Liberation Serif, serif" font-size="11.5" fill="#595959" textLength="21.9" lengthAdjust="spacingAndGlyphs">2018</text><text x="143.23" y="377.4" font-family="Liberation Serif, serif" font-size="11.5" fill="#595959" textLength="21.9" lengthAdjust="spacingAndGlyphs">2019</text><text x="174.27" y="377.4" font-family="Liberation Serif, serif" font-size="11.5" fill="#595959" textLength="21.9" lengthAdjust="spacingAndGlyphs">2020</text><text x="205.31" y="377.4" font-family="Liberation Serif, serif" font-size="11.5" fill="#595959" textLength="21.9" lengthAdjust="spacingAndGlyphs">2021</text></svg><svg class="abs" style="left:0;top:0" width="768" height="432"><text x="327.2" y="127" font-family="Liberation Serif, serif" font-size="14.8" fill="#000">Revenue Trend Line</text><rect x="328.2" y="145" width="156.5" height="1" fill="#d9d9d9"/><text x="287.02" y="149.9" font-family="Liberation Sans, sans-serif" font-size="10.8" fill="#595959" textLength="33.18" lengthAdjust="spacingAndGlyphs">300000</text><rect x="328.2" y="179.8" width="156.5" height="1" fill="#d9d9d9"/><text x="287.02" y="184.7" font-family="Liberation Sans, sans-serif" font-size="10.8" fill="#595959" textLength="33.18" lengthAdjust="spacingAndGlyphs">250000</text><rect x="328.2" y="214.6" width="156.5" height="1" fill="#d9d9d9"/><text x="287.02" y="219.5" font-family="Liberation Sans, sans-serif" font-size="10.8" fill="#595959" textLength="33.18" lengthAdjust="spacingAndGlyphs">200000</text><rect x="328.2" y="249.5" width="156.5" height="1" fill="#d9d9d9"/><text x="287.02" y="254.4" font-family="Liberation Sans, sans-serif" font-size="10.8" fill="#595959" textLength="33.18" lengthAdjust="spacingAndGlyphs">150000</text><rect x="328.2" y="284.3" width="156.5" height="1" fill="#d9d9d9"/><text x="287.02" y="289.2" font-family="Liberation Sans, sans-serif" font-size="10.8" fill="#595959" textLength="33.18" lengthAdjust="spacingAndGlyphs">100000</text><rect x="328.2" y="319.1" width="156.5" height="1" fill="#d9d9d9"/><text x="292.55" y="324" font-family="Liberation Sans, sans-serif" font-size="10.8" fill="#595959" textLength="27.65" lengthAdjust="spacingAndGlyphs">50000</text><rect x="328.2" y="353.9" width="156.5" height="1" fill="#d9d9d9"/><text x="314.67" y="358.8" font-family="Liberation Sans, sans-serif" font-size="10.8" fill="#595959" textLength="5.53" lengthAdjust="spacingAndGlyphs">0</text><polyline points="345.4,355.2 376.4,350.5 407.5,331 438.5,261 469.6,167" fill="none" stroke="#2f6bc9" stroke-width="1.7"/><circle cx="345.4" cy="355.2" r="2.5" fill="#2f6bc9"/><circle cx="376.4" cy="350.5" r="2.5" fill="#2f6bc9"/><circle cx="407.5" cy="331" r="2.5" fill="#2f6bc9"/><circle cx="438.5" cy="261" r="2.5" fill="#2f6bc9"/><circle cx="469.6" cy="167" r="2.5" fill="#2f6bc9"/><text x="334.15" y="377.4" font-family="Liberation Serif, serif" font-size="11.5" fill="#595959" textLength="21.9" lengthAdjust="spacingAndGlyphs">2017</text><text x="365.19" y="377.4" font-family="Liberation Serif, serif" font-size="11.5" fill="#595959" textLength="21.9" lengthAdjust="spacingAndGlyphs">2018</text><text x="396.23" y="377.4" font-family="Liberation Serif, serif" font-size="11.5" fill="#595959" textLength="21.9" lengthAdjust="spacingAndGlyphs">2019</text><text x="427.27" y="377.4" font-family="Liberation Serif, serif" font-size="11.5" fill="#595959" textLength="21.9" lengthAdjust="spacingAndGlyphs">2020</text><text x="458.31" y="377.4" font-family="Liberation Serif, serif" font-size="11.5" fill="#595959" textLength="21.9" lengthAdjust="spacingAndGlyphs">2021</text></svg><svg class="abs" style="left:0;top:0" width="768" height="432"><text x="623" y="127" font-family="Liberation Serif, serif" font-size="15" fill="#000" text-anchor="middle">Revenue Share</text><path d="M613.1 196.2 A71 71 0 0 1 666.2 210.2" fill="none" stroke="#56cbd4" stroke-width="50"/><path d="M666.2 210.2 A71 71 0 0 1 668.6 320.9" fill="none" stroke="#3269c4" stroke-width="50"/><path d="M668.6 320.9 A71 71 0 1 1 613.1 196.2" fill="none" stroke="#57cc99" stroke-width="50"/><text x="599" y="156" font-family="Liberation Sans, sans-serif" font-size="10" fill="#595959" text-anchor="middle">2%</text><text x="674" y="156" font-family="Liberation Sans, sans-serif" font-size="10" fill="#595959" text-anchor="middle">8%</text><text x="537" y="345" font-family="Liberation Sans, sans-serif" font-size="10" fill="#595959" text-anchor="middle">61%</text><text x="707" y="337" font-family="Liberation Sans, sans-serif" font-size="10" fill="#595959" text-anchor="middle">29%</text></svg></div></div><div class="sbtn" style="left:1.3px;top:455.4px;width:12.2px;height:12px"></div><svg class="abs" style="left:5px;top:458px" width="5" height="8"><path d="M4.5 0 V7 L0.2 3.5 Z" fill="#a4a4a4"/></svg><div class="sbtn" style="left:15.3px;top:455.4px;width:165.9px;height:12px;background:#f1f1f1"></div><svg class="abs" style="left:92.45px;top:459.4px" width="14" height="5"><path d="M0.5 0 V4.6 M2.5 0 V4.6 M4.5 0 V4.6 M6.5 0 V4.6 M8.5 0 V4.6 M10.5 0 V4.6 M12.5 0 V4.6" stroke="#bcbcbc" stroke-width="1"/></svg><div class="sbtn" style="right:16.2px;top:455.4px;width:12.6px;height:12px"></div><svg class="abs" style="right:20px;top:458px" width="5" height="8"><path d="M0.5 0 V7 L4.8 3.5 Z" fill="#a4a4a4"/></svg></div><div class="notes"><div class="abs" id="notes" style="left:20px;top:11px;font:21.2px/30px 'Liberation Sans',sans-serif;color:#1a0a0e;white-space:nowrap;letter-spacing:0.4px">Click to add notes</div><div class="sbtn" style="right:2.5px;top:2px;width:12.5px;height:12px"></div><svg class="abs" style="right:5.3px;top:6px" width="7" height="5"><path d="M0 4.5 H7 L3.5 0.5 Z" fill="#a8a8a8"/></svg><div class="sbtn" style="right:2.5px;top:16px;width:12.5px;height:7px"></div><div class="sbtn" style="right:2.5px;top:29px;width:12.5px;height:12px"></div><svg class="abs" style="right:5.3px;top:33px" width="7" height="5"><path d="M0 0.5 H7 L3.5 4.5 Z" fill="#a8a8a8"/></svg></div><div class="status"></div><svg class="abs" style="left:17px;top:599px" width="13" height="12"><path d="M0 1 H13" stroke="#333" stroke-width="2"/><path d="M1.5 2 V7 H11.5 V2 M3.3 3.6 H9.9 M6.5 7 V11 M4 11.5 H9" stroke="#333" fill="none"/></svg><svg class="abs" style="left:44.2px;top:606.3px" width="4.8" height="3.6"><path d="M0 0 L2.4 2.6 L4.8 0" fill="none" stroke="#555" stroke-width="1"/></svg><div class="sttxt" style="left:64px">Slide 1 of 1</div><div class="abs" style="left:166px;top:592px;width:1px;height:23px;background:#cbcbcb"></div><svg class="abs" style="left:183px;top:597px" width="19" height="14" viewBox="0 0 19 14"><circle cx="5.9" cy="2.9" r="2.65" fill="none" stroke="#444" stroke-width="1.1"/><path d="M0.6 12.1 Q0.7 7.3 5.9 7.3 Q11.1 7.3 11.3 12.1 Z" fill="none" stroke="#444" stroke-width="1.1"/><circle cx="12.6" cy="4.3" r="2.5" fill="#444"/><path d="M10.8 8.4 Q12.4 7.8 13.6 8 Q17.4 8.6 17.9 12.6 H12.5 Q12.3 9.8 10.8 8.4 Z" fill="#444"/></svg><div class="sttxt" style="left:206.4px;top:598px">2</div><div class="abs" style="left:224.5px;top:592px;width:1px;height:23px;background:#cbcbcb"></div><div class="sttxt" style="left:229px;top:598.4px;letter-spacing:0">All changes saved</div><svg class="abs" style="left:343.2px;top:598px" width="14" height="13"><rect x="0.5" y="0.5" width="13" height="12" fill="none" stroke="#444"/><rect x="2.5" y="2.5" width="9" height="8" fill="none" stroke="#444"/><path d="M4 4.5 H10 M4 6.5 H10 M4 8.5 H10" stroke="#444"/></svg><svg class="abs" style="left:379px;top:598px" width="14" height="13"><rect x="0.5" y="0.5" width="13" height="12" fill="none" stroke="#444"/><rect x="2.3" y="4" width="9.4" height="5" rx="2.2" fill="none" stroke="#444" stroke-width="1.2"/><path d="M4.5 6.5 H9.5 M4 2.4 H10 M4 10.6 H10" stroke="#444"/></svg><svg class="abs" style="left:416px;top:597px" width="15" height="15"><circle cx="7.5" cy="7.5" r="6.8" fill="none" stroke="#444" stroke-width="1.2"/><path d="M4.5 7.5 H10.5" stroke="#444" stroke-width="1.2"/></svg><div class="sttxt" style="left:448px;top:601px">Zoom 60%</div><div class="strip"></div></div><div class="abs" style="left:495px;top:0;width:13px;height:615px;background:linear-gradient(to right,rgba(0,0,0,0),rgba(0,0,0,0.11))"></div><div class="abs" style="left:508px;top:0;width:1px;height:615px;background:rgba(236,228,222,0.75)"></div><div class="abs" style="left:509px;top:0;width:2px;height:615px;background:#0f6cc7"></div><svg class="abs" style="left:622px;top:382px" width="13" height="20" viewBox="0 0 13 20"><path d="M0.5 0.7 V16.5 L4.2 13 L6.7 18.8 L9 17.8 L6.5 12.2 H11.7 Z" fill="#fff" stroke="#000" stroke-width="1"/></svg></body></html>
